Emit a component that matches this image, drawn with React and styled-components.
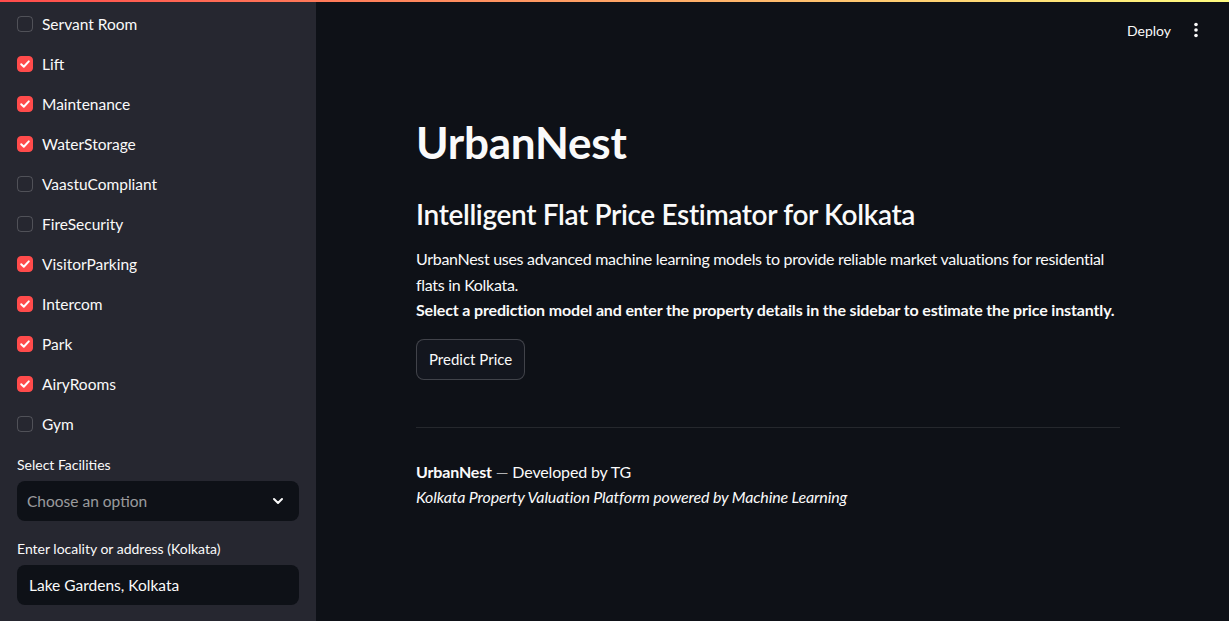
import React from 'react';
import styled, { createGlobalStyle } from 'styled-components';

const GlobalStyle = createGlobalStyle`
	html, body {
		margin:0;
		padding:0;
		background:#0e1117;
		font-family:Lato, "Noto Sans", sans-serif;
		color:#fafafa;
	}
	* { box-sizing:border-box; }
`;

const Page = styled.div`
	position:relative;
	display:flex;
	width:1229px;
	height:621px;
	overflow:hidden;
	background:#0e1117;
`;

const TopStripe = styled.div`
	position:absolute;
	top:0;
	left:0;
	right:0;
	height:2px;
	background:linear-gradient(90deg, #ff4b4b, #fffd80);
	z-index:2;
`;

const Sidebar = styled.aside`
	width:316px;
	flex-shrink:0;
	background:#262730;
	padding:4px 17px 0 17px;
	display:flex;
	flex-direction:column;
`;

const CheckRow = styled.label`
	display:flex;
	align-items:center;
	gap:9px;
	height:40px;
	font-size:15.5px;
	color:#fafafa;
`;

const Box = styled.span`
	width:16px;
	height:16px;
	border-radius:4px;
	display:flex;
	align-items:center;
	justify-content:center;
	background:${(props) => (props.checked ? '#ff4b4b' : 'transparent')};
	border:1px solid ${(props) => (props.checked ? '#ff4b4b' : 'rgba(250,250,250,0.2)')};
`;

const FieldLabel = styled.div`
	font-size:14px;
	height:18px;
	line-height:18px;
	margin:${(props) => props.top}px 0 7px;
`;

const Field = styled.div`
	height:40px;
	border-radius:8px;
	background:#0e1117;
	display:flex;
	align-items:center;
	justify-content:space-between;
	padding:0 14px 0 ${(props) => (props.placeholder ? '10px' : '12px')};
	font-size:15.5px;
	color:${(props) => (props.placeholder ? 'rgba(250,250,250,0.6)' : '#fafafa')};
`;

const Main = styled.main`
	position:relative;
	flex:1;
	padding-right:9px;
`;

const Header = styled.div`
	position:absolute;
	top:0;
	right:0;
	height:60px;
	display:flex;
	align-items:center;
	gap:23px;
	padding-right:31px;
`;

const Deploy = styled.span`
	font-size:14px;
	color:#fafafa;
`;

const Block = styled.div`
	width:704px;
	margin:0 auto;
	padding-top:116px;
`;

const Title = styled.h1`
	margin:0;
	font-size:44px;
	line-height:52px;
	font-weight:700;
	letter-spacing:-0.2px;
`;

const Subtitle = styled.h3`
	margin:29px 0 0;
	font-size:28px;
	line-height:34px;
	font-weight:600;
	letter-spacing:-0.35px;
`;

const Para = styled.p`
	margin:15px 0 0;
	font-size:16px;
	line-height:25.6px;
	letter-spacing:-0.3px;

	strong {
		letter-spacing:-0.15px;
	}
`;

const Button = styled.button`
	margin-top:16px;
	height:41px;
	padding:0 12px;
	border-radius:8px;
	border:1px solid rgba(250,250,250,0.2);
	background:#13161e;
	color:#fafafa;
	font-family:inherit;
	font-size:15px;
`;

const Rule = styled.hr`
	margin:47px 0 0;
	border:none;
	border-top:1px solid rgba(250,250,250,0.1);
`;

const Footer = styled.p`
	margin:31px 0 0;
	font-size:16px;
	line-height:25.6px;
	letter-spacing:-0.15px;
`;

const Dash = styled.span`
	color:rgba(250,250,250,0.7);
`;

const facilities = [
	['Servant Room', false],
	['Lift', true],
	['Maintenance', true],
	['WaterStorage', true],
	['VaastuCompliant', false],
	['FireSecurity', false],
	['VisitorParking', true],
	['Intercom', true],
	['Park', true],
	['AiryRooms', true],
	['Gym', false],
];

const Tick = () => (
	<svg width="12" height="12" viewBox="0 0 12 12">
		<path d="M2.2 6.2 L4.8 8.8 L9.8 3.4" fill="none" stroke="#fff" strokeWidth="2" strokeLinecap="round" strokeLinejoin="round" />
	</svg>
);

const Chevron = () => (
	<svg width="14" height="14" viewBox="0 0 14 14">
		<path d="M3 5 L7 9 L11 5" fill="none" stroke="#fafafa" strokeWidth="2" strokeLinecap="round" strokeLinejoin="round" />
	</svg>
);

const Dots = () => (
	<svg width="4" height="16" viewBox="0 0 4 16">
		<circle cx="2" cy="2.5" r="1.8" fill="#fafafa" />
		<circle cx="2" cy="8" r="1.8" fill="#fafafa" />
		<circle cx="2" cy="13.5" r="1.8" fill="#fafafa" />
	</svg>
);

export default function App() {
	return (
		<Page>
			<GlobalStyle />
			<TopStripe />
			<Sidebar>
				{facilities.map(([name, checked]) => (
					<CheckRow key={name}>
						<Box checked={checked}>{checked && <Tick />}</Box>
						{name}
					</CheckRow>
				))}
				<FieldLabel top={12}>Select Facilities</FieldLabel>
				<Field placeholder>
					Choose an option
					<Chevron />
				</Field>
				<FieldLabel top={19}>Enter locality or address (Kolkata)</FieldLabel>
				<Field>Lake Gardens, Kolkata</Field>
			</Sidebar>
			<Main>
				<Header>
					<Deploy>Deploy</Deploy>
					<Dots />
				</Header>
				<Block>
					<Title>UrbanNest</Title>
					<Subtitle>Intelligent Flat Price Estimator for Kolkata</Subtitle>
					<Para>
						UrbanNest uses advanced machine learning models to provide reliable market valuations for residential flats in Kolkata.
						<br />
						<strong>Select a prediction model and enter the property details in the sidebar to estimate the price instantly.</strong>
					</Para>
					<Button>Predict Price</Button>
					<Rule />
					<Footer>
						<strong>UrbanNest</strong> <Dash>—</Dash> Developed by TG
						<br />
						<em>Kolkata Property Valuation Platform powered by Machine Learning</em>
					</Footer>
				</Block>
			</Main>
		</Page>
	);
}
